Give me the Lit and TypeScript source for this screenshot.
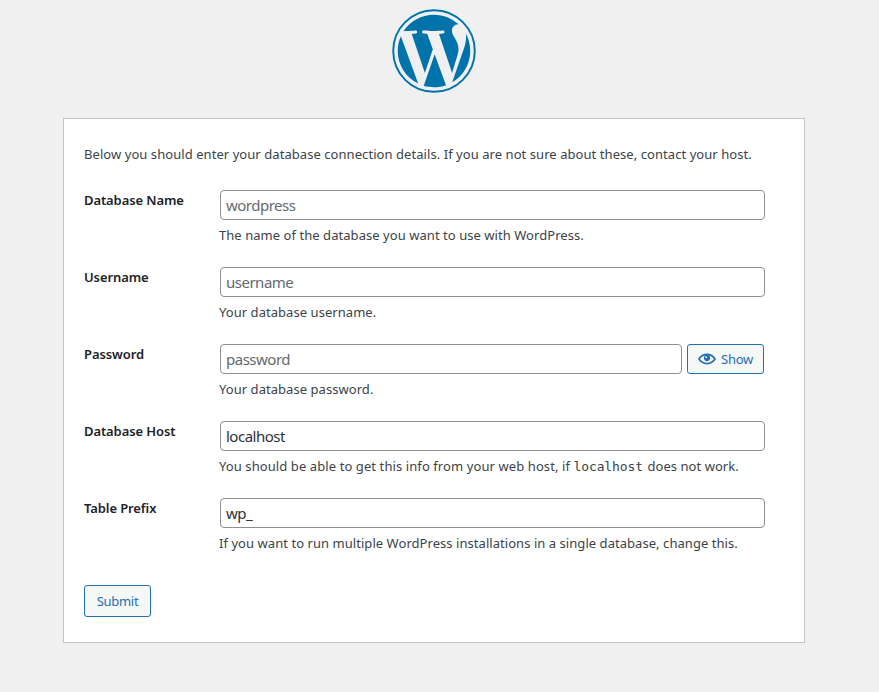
import { LitElement, html, css } from "lit";
import { customElement } from "lit/decorators.js";

const WP_PIECES = "M21.469 6.825c.84 1.537 1.318 3.3 1.318 5.175 0 3.979-2.156 7.456-5.363 9.325l3.295-9.527c.615-1.54.82-2.771.82-3.864 0-.405-.026-.78-.07-1.11m-7.981.105c.647-.03 1.232-.105 1.232-.105.582-.075.514-.93-.067-.899 0 0-1.755.135-2.88.135-1.064 0-2.85-.15-2.85-.15-.585-.03-.661.855-.075.885 0 0 .54.061 1.125.09l1.68 4.605-2.37 7.08L5.354 6.9c.649-.03 1.234-.1 1.234-.1.585-.075.516-.93-.065-.896 0 0-1.746.138-2.874.138-.2 0-.438-.008-.69-.015C4.911 3.15 8.235 1.215 12 1.215c2.809 0 5.365 1.072 7.286 2.833-.046-.003-.091-.009-.141-.009-1.06 0-1.812.923-1.812 1.914 0 .89.513 1.643 1.06 2.531.411.72.89 1.643.89 2.977 0 .915-.354 1.994-.821 3.479l-1.075 3.585-3.9-11.61.001.014zM12 22.784c-1.059 0-2.081-.153-3.048-.437l3.237-9.406 3.315 9.087c.024.053.05.101.078.149-1.12.393-2.325.609-3.582.609M1.211 12c0-1.564.336-3.05.935-4.39L7.29 21.709C3.694 19.96 1.212 16.271 1.211 12";
const EYE = "M19.7 9.4C17.7 6 14 3.9 10 3.9S2.3 6 .3 9.4L0 10l.3.6c2 3.4 5.7 5.5 9.7 5.5s7.7-2.1 9.7-5.5l.3-.6-.3-.6zM10 14.1c-3.1 0-6-1.6-7.7-4.1C3.6 8 5.7 6.6 8 6.1c-.9.6-1.5 1.7-1.5 2.9 0 1.9 1.6 3.5 3.5 3.5s3.5-1.6 3.5-3.5c0-1.2-.6-2.3-1.5-2.9 2.3.5 4.4 1.9 5.7 3.9-1.7 2.5-4.6 4.1-7.7 4.1z";

@customElement("app-root")
export class AppRoot extends LitElement {
  static styles = css`
    :host {
      display: block;
      min-height: 692px;
      background: #f0f0f1;
      color: #3c434a;
      font-family: "Noto Sans", "Open Sans", sans-serif;
      font-size: 13px;
      line-height: 19.5px;
      box-sizing: border-box;
      padding: 9px 0 0 63px;
    }
    * { box-sizing: border-box; }
    .wrap { width: 742px; }
    .logo { display: block; width: 84px; height: 84px; margin: 0 auto 25px; }
    .pieces { fill: #0073aa; }
    .ring { fill: none; stroke: #0073aa; stroke-width: 0.55; }
    .card {
      height: 525px;
      background: #fff;
      border: 1px solid #c3c4c7;
      padding: 26px 20px 0;
    }
    .intro { margin: 0; letter-spacing: 0.06px; white-space: nowrap; }
    .rows { display: flex; flex-direction: column; gap: 17px; margin-top: 25px; }
    .row { display: grid; grid-template-columns: 136px 545px; height: 60px; }
    .label { font-weight: 600; color: #1d2327; letter-spacing: -0.1px; padding-top: 1px; }
    .field { display: flex; gap: 5px; }
    input {
      flex: 1;
      min-width: 0;
      width: 100%;
      height: 30px;
      border: 1px solid #8c8f94;
      border-radius: 4px;
      padding: 0 5px;
      font: 15px "Noto Sans", sans-serif;
      letter-spacing: -0.5px;
      color: #2c3338;
      background: #fff;
      outline: none;
      margin: 0;
    }
    input::placeholder { color: #646970; opacity: 1; }
    .desc { margin: 6px 0 0 -1px; letter-spacing: 0.05px; white-space: nowrap; }
    .wide { letter-spacing: 0.09px; }
    code { font-family: "DejaVu Sans Mono", monospace; font-size: 13px; letter-spacing: -0.1px; margin-right: 1px; }
    button {
      border: 1px solid #2271b1;
      border-radius: 3px;
      background: #f6f7f7;
      color: #2271b1;
      font: 13px "Noto Sans", sans-serif;
      letter-spacing: -0.3px;
      padding: 0;
      height: 30px;
      display: inline-flex;
      align-items: center;
      justify-content: center;
    }
    .show { width: 77px; flex: none; margin-right: 1px; gap: 5px; }
    .show svg { width: 18px; height: 18px; fill: #2271b1; }
    .glint { fill: #f6f7f7; }
    .submit { width: 67px; height: 32px; }
    .actions { margin-top: 27px; }
  `;

  private row(label: string, desc: unknown, value = "", placeholder = "", show = false) {
    return html`<div class="row">
      <div class="label">${label}</div>
      <div>
        <div class="field">
          <input .value=${value} placeholder=${placeholder} />
          ${show
            ? html`<button class="show" type="button">
                <svg viewBox="0 0 20 20"><path d=${EYE} /><circle class="glint" cx="9" cy="8" r="1" /></svg>Show
              </button>`
            : null}
        </div>
        <p class="desc">${desc}</p>
      </div>
    </div>`;
  }

  render() {
    return html`
      <div class="wrap">
        <svg class="logo" viewBox="0 0 24 24">
          <circle class="ring" cx="12" cy="12" r="11.65" />
          <path class="pieces" transform="translate(12 12) scale(.96) translate(-12 -12)" d=${WP_PIECES} />
        </svg>
        <main class="card">
          <p class="intro">Below you should enter your database connection details. If you are not sure about these, contact your host.</p>
          <div class="rows">
            ${this.row("Database Name", "The name of the database you want to use with WordPress.", "", "wordpress")}
            ${this.row("Username", "Your database username.", "", "username")}
            ${this.row("Password", "Your database password.", "", "password", true)}
            ${this.row("Database Host", html`<span class="wide">You should be able to get this info from your web host, if </span><code>localhost</code> does not work.`, "localhost")}
            ${this.row("Table Prefix", "If you want to run multiple WordPress installations in a single database, change this.", "wp_")}
          </div>
          <div class="actions"><button class="submit" type="button">Submit</button></div>
        </main>
      </div>
    `;
  }
}
